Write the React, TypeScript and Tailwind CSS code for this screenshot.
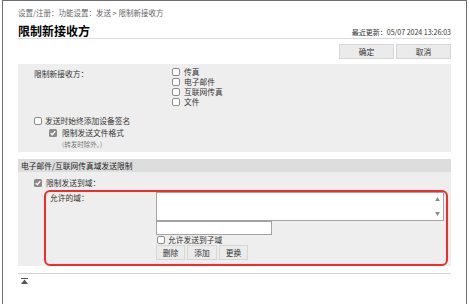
import React from "react";

function Box({ checked }: { checked?: boolean }) {
  if (checked) {
    return (
      <span className="inline-flex h-[8px] w-[8px] shrink-0 items-center justify-center rounded-[1.5px] bg-[#8a8a8a]">
        <svg viewBox="0 0 8 8" className="h-[8px] w-[8px]">
          <path d="M1.7 4.1 L3.3 5.7 L6.3 2.2" stroke="white" strokeWidth="1.3" fill="none" />
        </svg>
      </span>
    );
  }
  return <span className="inline-block h-[8px] w-[8px] shrink-0 rounded-[2px] border border-[#8a8a8a] bg-white" />;
}

function Btn({ children, w }: { children: React.ReactNode; w: string }) {
  return (
    <div className={`${w} flex h-[15px] items-center justify-center border border-[#d6d6d6] bg-[#ebebeb] text-[7.75px] leading-[13px] text-[#333]`}>
      {children}
    </div>
  );
}

export default function App() {
  return (
    <div className="h-[304px] w-[469px] overflow-hidden bg-white font-['Noto_Sans_CJK_SC',sans-serif]">
      <div className="ml-[2px] h-[304px] w-[465px] border-l border-r border-t border-[#6f6f6f] px-[15px] text-[#333]">
        <div className="pt-[7px] text-[7.5px] leading-[10px] text-[#666]">设置/注册：功能设置：发送 &gt; 限制新接收方</div>
        <div className="flex h-[21px] items-end justify-between border-b border-[#dcdcdc]">
          <div className="text-[12px] font-bold leading-[14px] text-black">限制新接收方</div>
          <div className="pb-[1px] text-[7px] leading-[10px] text-[#333]">最近更新：05/07 2024 13:26:03</div>
        </div>
        <div className="mt-[5px] flex justify-end gap-[2px]">
          <Btn w="w-[55px]">确定</Btn>
          <Btn w="w-[55px]">取消</Btn>
        </div>

        <div className="mt-[5px] h-[88px] bg-[#eeeeee] pt-[3px] text-[7.75px]">
          <div className="flex">
            <div className="w-[154px] pl-[16px] pt-[2px] leading-[10px]">限制新接收方：</div>
            <div className="flex flex-col">
              {["传真", "电子邮件", "互联网传真", "文件"].map((t) => (
                <div key={t} className="flex h-[10px] items-center gap-[4px] leading-[10px]">
                  <Box />
                  <span>{t}</span>
                </div>
              ))}
            </div>
          </div>
          <div className="mt-[9px] flex h-[10px] items-center gap-[3px] pl-[16px] leading-[10px]">
            <Box />
            <span>发送时始终添加设备签名</span>
          </div>
          <div className="mt-[2px] flex h-[10px] items-center gap-[5px] pl-[31px] leading-[10px]">
            <Box checked />
            <span>限制发送文件格式</span>
          </div>
          <div className="mt-[2px] pl-[44px] text-[6.5px] leading-[8px] text-[#777]">(转发时除外。)</div>
        </div>

        <div className="mt-[7px] h-[13px] bg-[#dddddd] pl-[3px] text-[7.75px] leading-[13px] text-[#222]">电子邮件/互联网传真域发送限制</div>
        <div className="flex h-[94px] flex-col bg-[#eeeeee] pt-[6px] text-[7.75px]">
          <div className="flex h-[10px] items-center gap-[4px] pl-[16px] leading-[10px]">
            <Box checked />
            <span>限制发送到域：</span>
          </div>
          <div className="ml-[26px] mr-[3px] mt-[2px] flex flex-1 rounded-[6px] border-2 border-[#f52a2a]">
            <div className="w-[110px] pl-[4px] pt-[1px] leading-[10px]">允许的域：</div>
            <div className="flex flex-1 flex-col pr-[2px]">
              <div className="flex h-[29px] flex-col items-end justify-between border border-[#a3a3a3] bg-white px-[3px] py-[4px]">
                <svg viewBox="0 0 6 5" className="h-[4px] w-[5px]"><path d="M3 0 L6 5 L0 5 Z" fill="#8a8a8a" /></svg>
                <svg viewBox="0 0 6 5" className="h-[4px] w-[5px]"><path d="M0 0 L6 0 L3 5 Z" fill="#8a8a8a" /></svg>
              </div>
              <div className="h-[14px] w-[116px] border border-[#a3a3a3] bg-white" />
              <div className="flex h-[10px] items-center gap-[3px] pl-[1px] leading-[10px]">
                <Box />
                <span>允许发送到子域</span>
              </div>
              <div className="flex gap-[2px]">
                <Btn w="w-[29px]">删除</Btn>
                <Btn w="w-[30px]">添加</Btn>
                <Btn w="w-[29px]">更换</Btn>
              </div>
            </div>
          </div>
        </div>

        <div className="mt-[7px] border-t border-[#d4d4d4] pl-[3px] pt-[4px]">
          <svg viewBox="0 0 7 6" className="h-[6px] w-[7px]">
            <rect x="0" y="0" width="7" height="1" fill="#555" />
            <path d="M3.5 1.5 L7 6 L0 6 Z" fill="#555" />
          </svg>
        </div>
      </div>
    </div>
  );
}
